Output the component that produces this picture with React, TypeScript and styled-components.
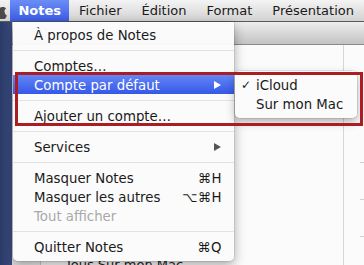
import React from "react";
import styled, { createGlobalStyle } from "styled-components";

const GlobalStyle = createGlobalStyle`
  html, body {
    margin: 0;
    padding: 0;
    overflow: hidden;
  }
  body {
    font-family: "DejaVu Sans", "Liberation Sans", sans-serif;
  }
`;

const Screen = styled.div`
  position: relative;
  width: 364px;
  height: 265px;
  overflow: hidden;
  display: flex;
  flex-direction: column;
  background: #34457a;
`;

const MenuBar = styled.div`
  height: 21px;
  flex-shrink: 0;
  display: flex;
  align-items: stretch;
  background: linear-gradient(#f3f3f3, #d3d3d3);
  border-bottom: 1px solid #5a5a5a;
  font-size: 13px;
  color: #1a1a1a;
  white-space: nowrap;
`;

const AppleSlot = styled.div`
  width: 14px;
  display: flex;
  align-items: center;
  overflow: hidden;
`;

const MenuTitle = styled.div<{ $active?: boolean }>`
  display: flex;
  align-items: center;
  padding: 0 ${(p) => (p.$active ? "8px" : "10px")};
  font-weight: ${(p) => (p.$active ? "bold" : "normal")};
  color: ${(p) => (p.$active ? "#ffffff" : "#1a1a1a")};
  background: ${(p) =>
    p.$active ? "linear-gradient(#6c8df6, #3a5de9)" : "transparent"};
`;

const Desk = styled.div`
  flex: 1;
  display: flex;
`;

const DeskStrip = styled.div`
  width: 12px;
  background: linear-gradient(90deg, #2b3b68, #3a4c82);
`;

const Window = styled.div`
  flex: 1;
  display: flex;
  flex-direction: column;
  background: #fbfbfb;
`;

const Toolbar = styled.div`
  height: 22px;
  background: linear-gradient(#eeeeee, #c3c3c3);
  border-bottom: 1px solid #8a8a8a;
`;

const WindowBody = styled.div`
  flex: 1;
  display: flex;
`;

const Sidebar = styled.div`
  width: 28px;
  background: linear-gradient(90deg, #e2e2e2, #ececec);
  border-right: 1px solid #c9c9c9;
`;

const NoteList = styled.div`
  flex: 1;
  display: flex;
  flex-direction: column;
  justify-content: flex-end;
  border-right: 1px solid #d6d6d6;
`;

const ListRow = styled.div`
  height: 8px;
  padding-left: 24px;
  font-size: 13px;
  line-height: 15px;
  color: #222;
  white-space: nowrap;
`;

const Paper = styled.div`
  width: 20px;
  display: flex;
  flex-direction: column;
  padding-top: 117px;
  gap: 36px;
`;

const PaperLine = styled.div`
  height: 1px;
  margin-left: 16px;
  background: #d0d0d0;
`;

const Dropdown = styled.div`
  position: absolute;
  top: 22px;
  left: 13px;
  width: 221px;
  padding: 3px 0 5px;
  background: rgba(251, 251, 251, 0.97);
  border-radius: 0 0 5px 5px;
  box-shadow: 0 4px 12px rgba(0, 0, 0, 0.35), 0 0 0 1px rgba(0, 0, 0, 0.08);
  font-size: 13.3px;
  color: #1a1a1a;
`;

const Item = styled.div<{ $selected?: boolean; $disabled?: boolean }>`
  height: 19px;
  display: flex;
  align-items: center;
  justify-content: space-between;
  padding: 1px 12px 0 21px;
  box-sizing: border-box;
  white-space: nowrap;
  color: ${(p) =>
    p.$selected ? "#ffffff" : p.$disabled ? "#a9a9a9" : "#1a1a1a"};
  background: ${(p) =>
    p.$selected ? "linear-gradient(#6486f5, #3558e8)" : "transparent"};
`;

const Shortcut = styled.span`
  letter-spacing: 0.5px;
`;

const Arrow = styled.span<{ $light?: boolean }>`
  width: 0;
  height: 0;
  margin-right: 1px;
  border-top: 4px solid transparent;
  border-bottom: 4px solid transparent;
  border-left: 7px solid ${(p) => (p.$light ? "#ffffff" : "#555555")};
`;

const Separator = styled.div`
  height: 1px;
  margin: 6px 0 5px;
  background: #e2e2e2;
`;

const Submenu = styled.div`
  position: absolute;
  top: 71px;
  left: 235px;
  width: 122px;
  padding: 4px 0 5px;
  background: rgba(251, 251, 251, 0.98);
  border-radius: 5px;
  box-shadow: 0 4px 10px rgba(0, 0, 0, 0.3), 0 0 0 1px rgba(0, 0, 0, 0.08);
  font-size: 13.3px;
  color: #1a1a1a;
`;

const SubItem = styled.div`
  height: 19px;
  display: flex;
  align-items: center;
  padding-top: 1px;
  box-sizing: border-box;
  white-space: nowrap;
`;

const CheckCol = styled.span`
  width: 21px;
  padding-left: 6px;
  box-sizing: border-box;
  font-size: 12px;
`;

const Annotation = styled.div`
  position: absolute;
  top: 72px;
  left: 15px;
  width: 348px;
  height: 54px;
  box-sizing: border-box;
  border: 3px solid #ab1d22;
  pointer-events: none;
`;

function AppleLogo() {
  return (
    <svg width="14" height="16" viewBox="0 0 14 16" style={{ marginLeft: -7 }}>
      <path
        d="M11.4 8.5c0-2 1.6-2.9 1.7-3-0.9-1.4-2.4-1.6-2.9-1.6-1.2-0.1-2.4 0.7-3 0.7-0.6 0-1.6-0.7-2.6-0.7C3.2 4 1.9 4.8 1.2 6.1c-1.5 2.6-0.4 6.4 1.1 8.5 0.7 1 1.5 2.1 2.6 2.1 1 0 1.4-0.7 2.7-0.7 1.2 0 1.6 0.7 2.7 0.7 1.1 0 1.8-1 2.5-2 0.8-1.2 1.1-2.300 1.1-2.3 0 0-2.2-0.8-2.2-3.2z"
        fill="#4a4a4a"
      />
    </svg>
  );
}

export default function App() {
  return (
    <>
      <GlobalStyle />
      <Screen>
        <MenuBar>
          <AppleSlot>
            <AppleLogo />
          </AppleSlot>
          <MenuTitle $active>Notes</MenuTitle>
          <MenuTitle>Fichier</MenuTitle>
          <MenuTitle>Édition</MenuTitle>
          <MenuTitle>Format</MenuTitle>
          <MenuTitle>Présentation</MenuTitle>
        </MenuBar>
        <Desk>
          <DeskStrip />
          <Window>
            <Toolbar />
            <WindowBody>
              <Sidebar />
              <NoteList>
                <ListRow>Tous Sur mon Mac</ListRow>
              </NoteList>
              <Paper>
                <PaperLine />
                <PaperLine />
                <PaperLine />
              </Paper>
            </WindowBody>
          </Window>
        </Desk>

        <Dropdown>
          <Item>À propos de Notes</Item>
          <Separator />
          <Item>Comptes…</Item>
          <Item $selected>
            Compte par défaut
            <Arrow $light />
          </Item>
          <Separator />
          <Item>Ajouter un compte…</Item>
          <Separator />
          <Item>
            Services
            <Arrow />
          </Item>
          <Separator />
          <Item>
            Masquer Notes
            <Shortcut>⌘H</Shortcut>
          </Item>
          <Item>
            Masquer les autres
            <Shortcut>⌥⌘H</Shortcut>
          </Item>
          <Item $disabled>Tout afficher</Item>
          <Separator />
          <Item>
            Quitter Notes
            <Shortcut>⌘Q</Shortcut>
          </Item>
        </Dropdown>

        <Submenu>
          <SubItem>
            <CheckCol>✓</CheckCol>
            iCloud
          </SubItem>
          <SubItem>
            <CheckCol />
            Sur mon Mac
          </SubItem>
        </Submenu>

        <Annotation />
      </Screen>
    </>
  );
}
